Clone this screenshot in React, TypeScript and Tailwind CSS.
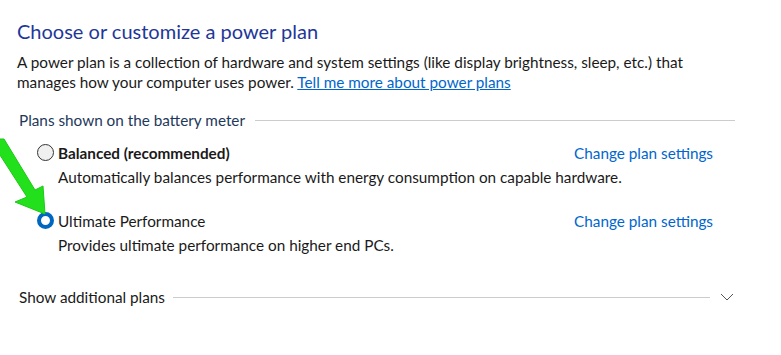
import React from "react"

function Radio({ checked }: { checked?: boolean }) {
  if (checked) {
    return (
      <span className="w-[17px] h-[17px] rounded-full border-[4px] border-[#0067c0] bg-white shrink-0" />
    )
  }
  return <span className="w-[17px] h-[17px] rounded-full border border-[#333] bg-[#f0f0f0] shrink-0" />
}

function GreenArrow() {
  return (
    <svg className="absolute left-0 top-0" width="60" height="230" viewBox="0 0 60 230">
      <polygon
        points="-2,139 4,139 35,190 43,186 45,214 15,202 27,197 -2,152"
        fill="#22e01c"
        stroke="#1cc816"
        strokeWidth="1"
        strokeLinejoin="round"
      />
    </svg>
  )
}

interface PlanProps {
  name: string
  desc: string
  bold?: boolean
  checked?: boolean
}

function Plan({ name, desc, bold, checked }: PlanProps) {
  return (
    <div className="flex flex-col">
      <div className="flex items-center h-[25px] pl-[20px] pr-[22px]">
        <Radio checked={checked} />
        <span className={`ml-[4px] text-[#1a1a1a] ${bold ? "font-bold" : ""}`}>{name}</span>
        <a className="ml-auto text-[#0066cc]">Change plan settings</a>
      </div>
      <div className="pl-[41px] h-[25px] leading-[25px] text-[#1a1a1a]">{desc}</div>
    </div>
  )
}

export default function App() {
  return (
    <div
      className="relative w-[781px] h-[355px] bg-white overflow-hidden text-[15.3px] leading-[20px]"
      style={{ fontFamily: 'Lato, "Segoe UI", sans-serif' }}
    >
      <div className="pl-[17px] pr-[46px] pt-[17px]">
        <h1 className="text-[20px] leading-[28px] text-[#1e3799]">Choose or customize a power plan</h1>
        <p className="mt-[7px] text-[#1a1a1a]">
          A power plan is a collection of hardware and system settings (like display brightness, sleep, etc.) that
          <br />
          manages how your computer uses power.{" "}
          <a className="text-[#0066cc] underline">Tell me more about power plans</a>
        </p>

        <div className="flex items-center mt-[18px] pl-[2px]">
          <span className="text-[#1e395b] whitespace-nowrap">Plans shown on the battery meter</span>
          <span className="flex-1 h-px bg-[#cccccc] ml-[10px]" />
        </div>

        <div className="mt-[10px] flex flex-col gap-[18px]">
          <Plan name="Balanced (recommended)" desc="Automatically balances performance with energy consumption on capable hardware." bold />
          <Plan name="Ultimate Performance" desc="Provides ultimate performance on higher end PCs." checked />
        </div>

        <div className="flex items-center mt-[29px] pl-[2px] pr-[1px]">
          <span className="text-[#1a1a1a] whitespace-nowrap">Show additional plans</span>
          <span className="flex-1 h-px bg-[#cccccc] ml-[8px]" />
          <svg className="ml-[10px]" width="14" height="8" viewBox="0 0 14 8">
            <polyline points="1,1 7,7 13,1" fill="none" stroke="#555" strokeWidth="1" />
          </svg>
        </div>
      </div>
      <GreenArrow />
    </div>
  )
}
